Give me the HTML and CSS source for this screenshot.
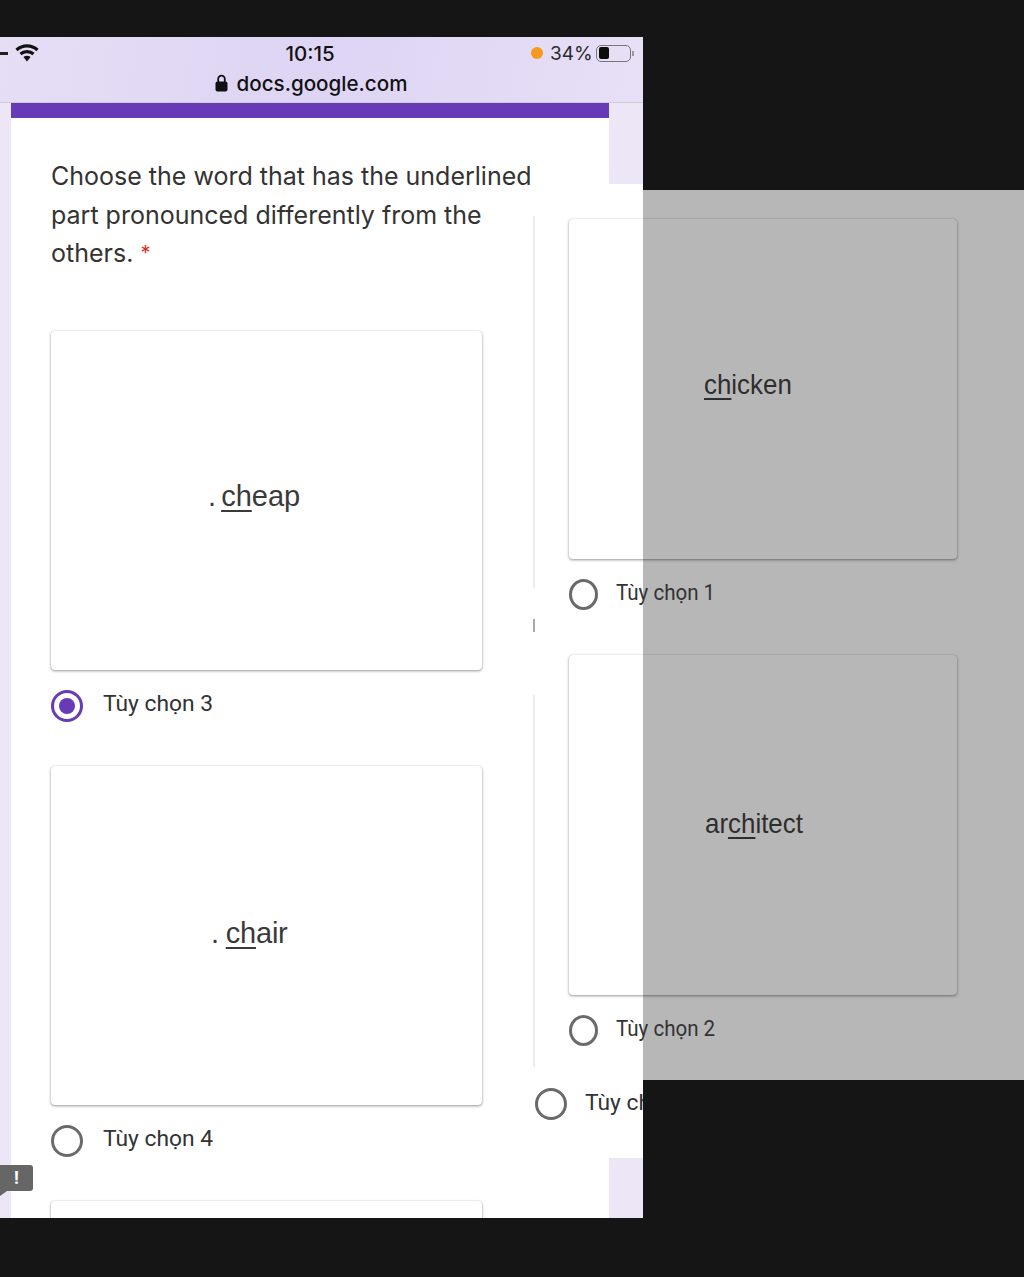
FILE: index.html
```html
<!DOCTYPE html>
<html lang="en">
<head>
    <meta charset="UTF-8">
    <meta name="viewport" content="width=device-width, initial-scale=1.0">
    <title>docs.google.com</title>
    <link rel="stylesheet" href="styles.css">
</head>
<body>
    <div class="screen">
        <div class="phone">
            <header class="topbar">
                <div class="status">
                    <div class="status-left">
                        <span class="signal-dash"></span>
                        <svg class="wifi" width="24" height="20" viewBox="0 0 24 20">
                            <path d="M1.5 7C7.5 1.5 16.5 1.5 22.5 7" fill="none" stroke="#111" stroke-width="3.2"/>
                            <path d="M5.5 11C9 7.8 15 7.8 18.5 11" fill="none" stroke="#111" stroke-width="3.2"/>
                            <path d="M8.4 14L12 18.5L15.6 14C13.4 12.4 10.6 12.4 8.4 14Z" fill="#111"/>
                        </svg>
                    </div>
                    <span class="clock">10:15</span>
                    <div class="status-right">
                        <span class="dot"></span>
                        <span class="percent">34%</span>
                        <span class="battery"><span class="battery-level"></span></span>
                        <span class="battery-nub"></span>
                    </div>
                </div>
                <div class="address">
                    <svg width="13" height="18" viewBox="0 0 13 18">
                        <path d="M3.2 8V5a3.3 3.3 0 0 1 6.6 0v3" fill="none" stroke="#111" stroke-width="1.8"/>
                        <rect x="0.5" y="7.5" width="12" height="10" rx="2" fill="#111"/>
                    </svg>
                    <span>docs.google.com</span>
                </div>
            </header>
            <main class="form-card">
                <p class="question">Choose the word that has the underlined part pronounced differently from the others. <span class="required">*</span></p>
                <div class="img-card word-cheap"><span>. <u>ch</u>eap</span></div>
                <div class="option">
                    <span class="radio checked"></span>
                    <span class="option-label">Tùy chọn 3</span>
                </div>
                <div class="img-card word-chair"><span>. <u>ch</u>air</span></div>
                <div class="option">
                    <span class="radio"></span>
                    <span class="option-label">Tùy chọn 4</span>
                </div>
                <div class="img-card"></div>
            </main>
            <div class="report-flag">!</div>
        </div>

        <section class="overlay">
            <span class="edge edge-a"></span>
            <span class="edge edge-b"></span>
            <span class="edge edge-c"></span>
            <div class="img-card narrow word-chicken"><span><u>ch</u>icken</span></div>
            <div class="option narrow-option">
                <span class="radio"></span>
                <span class="option-label squeezed">Tùy chọn 1</span>
            </div>
            <div class="img-card narrow word-architect"><span>ar<u>ch</u>itect</span></div>
            <div class="option narrow-option">
                <span class="radio"></span>
                <span class="option-label squeezed">Tùy chọn 2</span>
            </div>
            <div class="option cut-option">
                <span class="radio"></span>
                <span class="option-label">Tùy chọn</span>
            </div>
        </section>
    </div>
</body>
</html>
```

FILE: styles.css
```css
body {
    margin: 0;
    background-color: #151515;
    font-family: Roboto, "Liberation Sans", sans-serif;
    color: #2b2b2b;
}
.screen {
    position: relative;
    width: 1024px;
    height: 1277px;
    padding-top: 37px;
    box-sizing: border-box;
    overflow: hidden;
}
.phone {
    position: relative;
    width: 643px;
    height: 1181px;
    overflow: hidden;
    background-color: #ece6f6;
}

/* browser top bar */
.topbar {
    height: 65px;
    background: linear-gradient(100deg, #e6def5, #ded4f4 50%, #e7e0f6);
    border-bottom: 1px solid #cfcbd6;
    color: #111;
    font-family: Inter, sans-serif;
}
.status {
    position: relative;
    height: 32px;
    display: flex;
    justify-content: center;
    align-items: center;
    padding-right: 23px;
    box-sizing: border-box;
}
.clock {
    font-size: 20.5px;
    font-weight: 500;
}
.status-left {
    position: absolute;
    left: 0;
    top: 6px;
    display: flex;
    align-items: center;
    gap: 7px;
}
.signal-dash {
    width: 8px;
    height: 3px;
    background-color: #222;
}
.wifi {
    display: block;
}
.status-right {
    position: absolute;
    left: 531px;
    top: 4px;
    display: flex;
    align-items: center;
    height: 24px;
}
.dot {
    width: 12px;
    height: 12px;
    border-radius: 50%;
    background-color: #f6991c;
    margin-right: 7px;
}
.percent {
    font-size: 19px;
    color: #2a2a2a;
    margin-right: 5px;
    width: 41px;
    white-space: nowrap;
}
.battery {
    display: block;
    width: 35px;
    height: 17px;
    border: 1.5px solid #777;
    border-radius: 5px;
    box-sizing: border-box;
    padding: 1.5px;
}
.battery-level {
    display: block;
    width: 10px;
    height: 100%;
    background-color: #0c0c0c;
    border-radius: 2px;
}
.battery-nub {
    width: 2px;
    height: 5px;
    margin-left: 1px;
    background-color: #999;
}
.address {
    display: flex;
    justify-content: center;
    align-items: center;
    gap: 9px;
    height: 28px;
    padding-right: 21px;
    font-size: 20.6px;
    font-weight: 500;
}

/* form */
.form-card {
    width: 598px;
    margin-left: 11px;
    height: 1116px;
    box-sizing: border-box;
    background-color: #fff;
    border-top: 15px solid #673ab7;
    padding: 39px 0 0 40px;
}
.question {
    margin: 0;
    height: 174px;
    width: 490px;
    font-family: Inter, sans-serif;
    font-size: 25px;
    line-height: 38.5px;
    color: #333;
}
.required {
    color: #d93025;
    font-size: 20px;
    vertical-align: 2px;
    line-height: 1;
}
.img-card {
    width: 431px;
    height: 339px;
    box-sizing: border-box;
    display: flex;
    align-items: center;
    border-radius: 4px;
    box-shadow: 0 1px 3px rgba(0, 0, 0, 0.4), 0 0 1px rgba(0, 0, 0, 0.2);
    font-family: "Liberation Sans", sans-serif;
    font-size: 29px;
    color: #3a3a3a;
}
.img-card u {
    text-underline-offset: 4px;
    text-decoration-thickness: 2px;
}
.word-cheap {
    padding: 0 0 9px 157px;
    word-spacing: -3px;
}
.word-chair {
    padding: 0 0 5px 160px;
    word-spacing: -1px;
    letter-spacing: -0.2px;
}
.word-chicken {
    padding: 0 0 8px 135px;
}
.word-architect {
    padding: 0 0 3px 136px;
}
.option {
    height: 96px;
    display: flex;
    align-items: flex-start;
    gap: 20px;
    padding-top: 20px;
    box-sizing: border-box;
}
.radio {
    flex: none;
    position: relative;
    width: 32px;
    height: 32px;
    box-sizing: border-box;
    border: 3px solid #6a6a6a;
    border-radius: 50%;
}
.radio.checked {
    border-color: #673ab7;
}
.radio.checked::after {
    content: "";
    position: absolute;
    left: 5px;
    top: 5px;
    width: 16px;
    height: 16px;
    border-radius: 50%;
    background-color: #673ab7;
}
.option-label {
    font-size: 22.8px;
    line-height: 28px;
    color: #333;
    white-space: nowrap;
}

/* pasted second screenshot lying over the form */
.overlay {
    position: absolute;
    left: 533px;
    top: 184px;
    width: 491px;
    height: 974px;
    box-sizing: border-box;
    padding: 35px 0 0 36px;
    background:
        linear-gradient(#fff, #fff) 0 0 / 110px 100% no-repeat,
        linear-gradient(#b7b7b7, #b7b7b7) 110px 6px / 381px 890px no-repeat;
}
.img-card.narrow {
    width: 388px;
    height: 340px;
    font-size: 28px;
    color: #2e2e2e;
}
.narrow span {
    display: inline-block;
    transform: scaleX(0.925);
    transform-origin: left center;
}
.narrow-option {
    gap: 18px;
}
.narrow-option .radio {
    width: 29px;
    height: 31px;
}
.squeezed {
    display: inline-block;
    transform: scaleX(0.9);
    transform-origin: left center;
}
.cut-option {
    width: 110px;
    height: 50px;
    margin: -3px 0 0 -36px;
    padding: 0 0 0 2px;
    overflow: hidden;
    gap: 18px;
}
.cut-option .option-label {
    margin-top: 1px;
}
.edge {
    position: absolute;
    left: 0;
    width: 2px;
    background-color: #ebebeb;
}
.edge-a {
    top: 32px;
    height: 372px;
}
.edge-b {
    top: 435px;
    height: 13px;
    background-color: #aaa;
}
.edge-c {
    top: 511px;
    height: 372px;
}

.report-flag {
    position: absolute;
    left: 0;
    top: 1128px;
    width: 33px;
    height: 26px;
    background-color: #666;
    border-radius: 0 3px 3px 0;
    color: #fff;
    font-size: 18px;
    font-weight: 700;
    line-height: 26px;
    text-align: center;
}
.report-flag::after {
    content: "";
    position: absolute;
    left: 0;
    top: 26px;
    border-top: 5px solid #666;
    border-right: 7px solid transparent;
}
```
